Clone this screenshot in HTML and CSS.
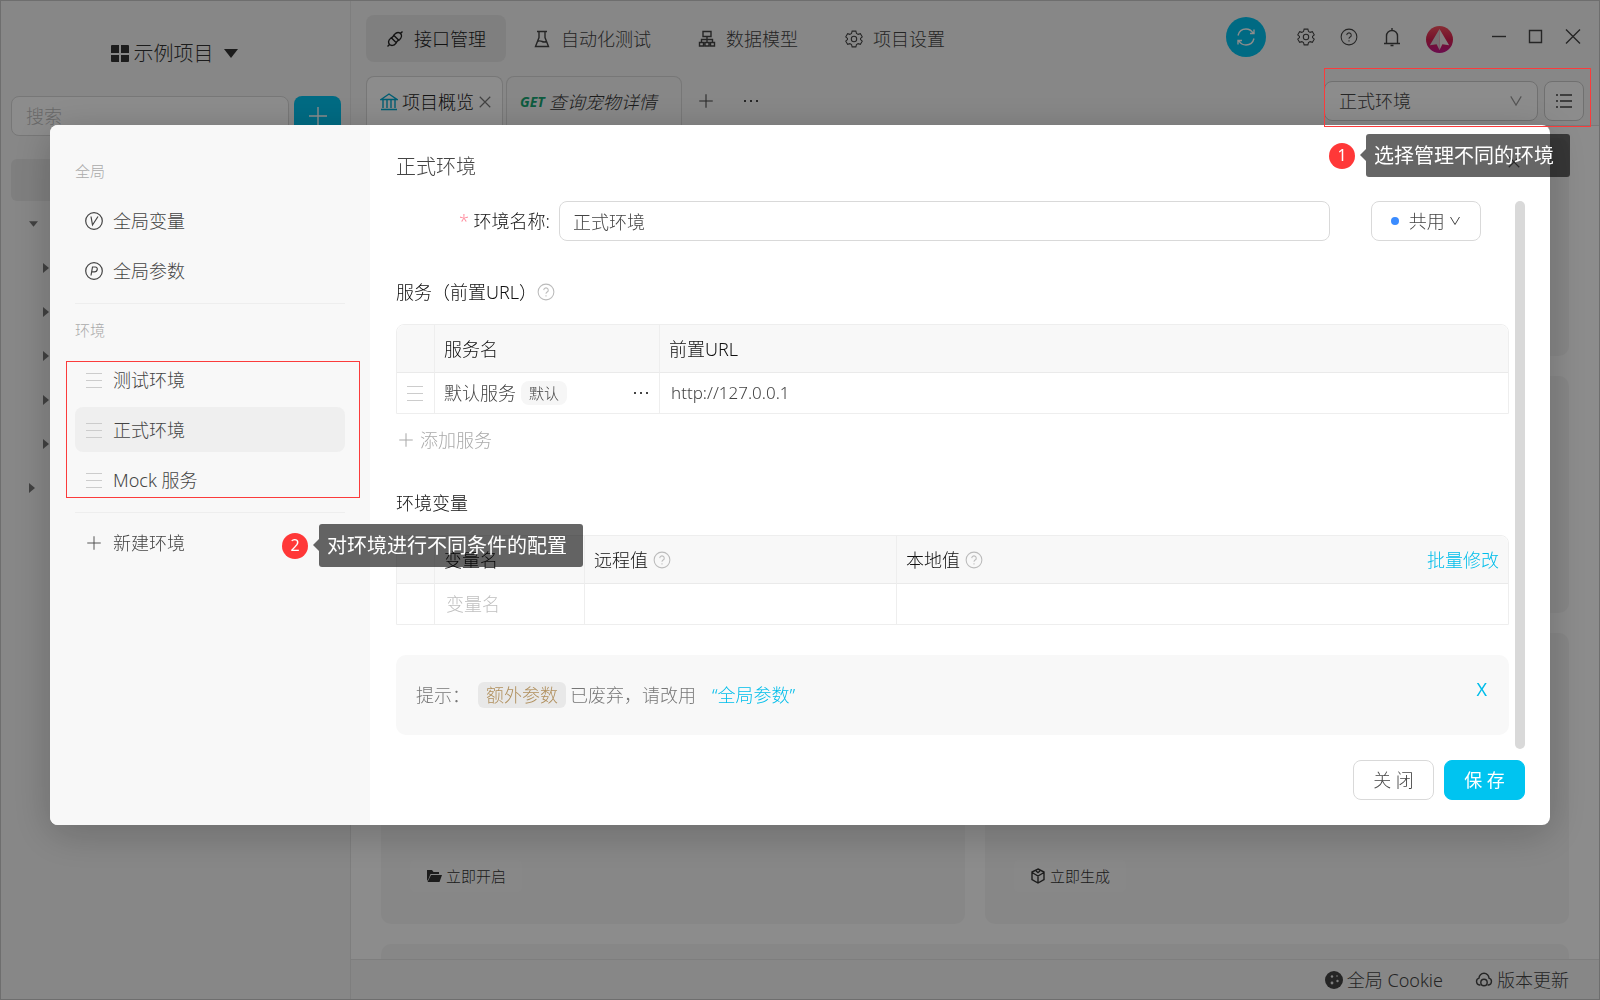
FILE: index.html
```html
<!DOCTYPE html>
<html lang="zh-CN">
<head>
<meta charset="utf-8">
<title>环境管理</title>
<meta name="viewport" content="width=device-width, initial-scale=1">
<link rel="stylesheet" href="styles.css">
</head>
<body>
<svg class="sprite" aria-hidden="true">
  <symbol id="i-gear" viewBox="0 0 24 24"><path d="M9.5 2.5h5l.8 3 2.2 1.300 3-.9 2.500 4.200-2.300 2.200v1.400l2.300 2.200-2.500 4.200-3-.9-2.200 1.300-.8 3h-5l-.8-3-2.200-1.300-3 .9L1 15.900l2.300-2.200v-1.400L1 10.100l2.500-4.200 3 .9 2.200-1.300z" transform="translate(0 -1)"/><circle cx="12" cy="12" r="3.600"/></symbol>
  <symbol id="i-help" viewBox="0 0 24 24"><circle cx="12" cy="12" r="10.500"/><path d="M9 9.500a3 3 0 1 1 4.500 2.600c-1 .6-1.500 1.100-1.500 2.200M12 16.400v1.600"/></symbol>
  <symbol id="i-plus" viewBox="0 0 24 24"><path d="M12 3v18M3 12h18"/></symbol>
  <symbol id="i-close" viewBox="0 0 24 24"><path d="M3 3l18 18M21 3L3 21"/></symbol>
  <symbol id="i-down" viewBox="0 0 24 24"><path d="M3 4l9 15 9-15"/></symbol>
  <symbol id="i-drag" viewBox="0 0 18 18"><path d="M1 2.500h16M1 9.500h16M1 16.500h16"/></symbol>
  <symbol id="i-dots" viewBox="0 0 18 18"><path d="M2 8h2v2H2zM8 8h2v2H8zM14 8h2v2h-2z"/></symbol>
</svg>

<div class="app">
  <aside class="side">
    <button class="project" type="button">
      <svg class="ico fill" viewBox="0 0 18 18"><path d="M1 0h7v8H0V1a1 1 0 0 1 1-1zM10 0h7a1 1 0 0 1 1 1v7h-8zM0 10h8v7H1a1 1 0 0 1-1-1zM10 10h8v6a1 1 0 0 1-1 1h-7z"/></svg>
      <span>示例项目</span>
      <svg class="caret" viewBox="0 0 14 9"><path d="M0 0h14L7 9z"/></svg>
    </button>
    <div class="search">
      <input type="text" placeholder="搜索" aria-label="搜索">
      <button type="button" aria-label="新建"><svg class="ico" viewBox="0 0 18 18"><path d="M9 0v18M0 9h18"/></svg></button>
    </div>
    <div class="root"></div>
    <ul class="tree">
      <li class="l0"><svg viewBox="0 0 10 6" class="tri-d"><path d="M0 0h10L5 6z"/></svg></li>
      <li class="l1"><svg viewBox="0 0 6 10" class="tri-r"><path d="M0 0v10l6-5z"/></svg></li>
      <li class="l1"><svg viewBox="0 0 6 10" class="tri-r"><path d="M0 0v10l6-5z"/></svg></li>
      <li class="l1"><svg viewBox="0 0 6 10" class="tri-r"><path d="M0 0v10l6-5z"/></svg></li>
      <li class="l1"><svg viewBox="0 0 6 10" class="tri-r"><path d="M0 0v10l6-5z"/></svg></li>
      <li class="l1"><svg viewBox="0 0 6 10" class="tri-r"><path d="M0 0v10l6-5z"/></svg></li>
      <li class="l0"><svg viewBox="0 0 6 10" class="tri-r"><path d="M0 0v10l6-5z"/></svg></li>
    </ul>
  </aside>

  <div class="main">
    <header class="top">
      <nav class="nav">
        <a href="#" class="on"><svg class="ico" viewBox="0 0 18 18"><path d="M4 14L1.500 16.500M14 4L16.500 1.500M3.500 14.500c-1.600-2-1-4.500 1-6l.8-.7 5 5-.7.8c-1.600 2-4.200 2.500-6.100.9zM7.700 5.200l.8-.8c1.800-2 4.300-2.400 6-.9 1.600 1.700 1 4.300-.8 6l-.9.8zM5.500 8L7.500 6M10 12.500L12 10.500"/></svg>接口管理</a>
        <a href="#"><svg class="ico" viewBox="0 0 18 18"><path d="M4 1.500h10M6 1.500v6L2.500 16.500h13L12 7.500v-6M4.500 11.500c2-1.300 3.500-.5 4.500 0s2.500 1 4.500 0"/></svg>自动化测试</a>
        <a href="#"><svg class="ico" viewBox="0 0 18 18"><path d="M5 1.500h8v5H5zM9 6.500v3M3.500 12V9.500h11V12M9 9.500V12M1.500 12.500h4v3.500h-4zM7 12.500h4v3.500H7zM12.500 12.500h4v3.500h-4z"/></svg>数据模型</a>
        <a href="#"><svg class="ico"><use href="#i-gear"/></svg>项目设置</a>
      </nav>
      <div class="tools">
        <button class="sync" type="button" aria-label="同步"><svg viewBox="0 0 20 20"><path d="M2 8.500C3 4.500 6 2 10 2c3 0 5.500 1.500 7 4M18 2.500V6.500h-4M18 11.500c-1 4-4 6.500-8 6.500-3 0-5.500-1.500-7-4M2 17.500V13.500h4"/></svg></button>
        <button type="button" aria-label="设置"><svg class="ico"><use href="#i-gear"/></svg></button>
        <button type="button" aria-label="帮助"><svg class="ico"><use href="#i-help"/></svg></button>
        <button type="button" aria-label="通知"><svg class="ico bell" viewBox="0 0 18 20"><path d="M1 16.500h16M3.500 16.500V9a5.500 5.500 0 0 1 11 0v7.500M9 3.500V1M7.500 18.500h3"/></svg></button>
        <button type="button" class="avatar" aria-label="账户"><svg viewBox="0 0 28 28"><defs><linearGradient id="av" x1="0" y1="0" x2="0" y2="1"><stop offset="0" stop-color="#f7525f"/><stop offset=".5" stop-color="#d8204f"/><stop offset="1" stop-color="#c2188f"/></linearGradient></defs><circle cx="14" cy="14" r="14" fill="url(#av)"/><path d="M14 3L4 20l7-1 3 6z" fill="#d9cdd0"/><path d="M14 3l10 17-7-1-3 6z" fill="#f3e9ea"/></svg></button>
        <button type="button" class="win" aria-label="最小化"><svg class="ico" viewBox="0 0 18 18"><path d="M2 8.500h14"/></svg></button>
        <button type="button" class="win" aria-label="最大化"><svg class="ico" viewBox="0 0 18 18"><path d="M2.500 2.500h12v12h-12z"/></svg></button>
        <button type="button" class="win" aria-label="关闭窗口"><svg class="ico" viewBox="0 0 18 18"><path d="M2 1.500l14 14M16 1.500L2 15.500"/></svg></button>
      </div>
    </header>

    <div class="tabs">
      <button type="button" class="tab on"><svg class="ico" viewBox="0 0 18 18"><path d="M1 6.500L9 1l8 5.500zM3 7v8M7 7v8M11 7v8M15 7v8M1 16.500h16"/></svg>项目概览<svg class="x"><use href="#i-close"/></svg></button>
      <button type="button" class="tab api"><b>GET</b><i>查询宠物详情</i></button>
      <button type="button" class="plain" aria-label="新标签"><svg class="ico"><use href="#i-plus"/></svg></button>
      <button type="button" class="plain" aria-label="更多"><svg class="ico fill"><use href="#i-dots"/></svg></button>
      <div class="env">
        <div class="pick">
          <select aria-label="环境"><option>正式环境</option></select>
          <svg class="chev"><use href="#i-down"/></svg>
        </div>
        <button type="button" class="list" aria-label="管理环境"><svg class="ico" viewBox="0 0 18 18"><path d="M5 3h12M5 9h12M5 15h12M1 3h2M1 9h2M1 15h2"/></svg></button>
      </div>
    </div>

    <div class="board">
      <div class="card"></div><div class="card"></div>
      <div class="card"></div><div class="card"></div>
      <div class="card end"><button type="button"><svg class="fill" viewBox="0 0 16 16"><path d="M1 2h5l1.500 2H13v2H4.500L2.500 11 1 13zM5 7h11l-2.500 7H1.500z"/></svg>立即开启</button></div>
      <div class="card end"><button type="button"><svg viewBox="0 0 16 16"><path d="M8 1l6 3v7.500L8 15l-6-3.500V4zM2 4.500L8 8l6-3.500M8 8v7M6 3l2 1.500L10 3M2 9v2.500L4.500 13M14 9v2.500L11.500 13"/></svg>立即生成</button></div>
      <div class="card wide"></div>
    </div>

    <footer class="foot">
      <a href="#"><svg class="ico" viewBox="0 0 18 18"><circle cx="9" cy="9" r="9" fill="currentColor" stroke="none"/><g fill="#e8e8e8" stroke="none"><circle cx="7" cy="5.500" r="1.200"/><circle cx="12.500" cy="10" r="1.200"/><circle cx="7" cy="12" r="1.400"/><circle cx="12" cy="5" r=".8"/></g></svg>全局 Cookie</a>
      <a href="#"><svg class="ico" viewBox="0 0 18 18"><path d="M5.500 14H4.500a3.500 3.500 0 0 1-.5-6.800 5 5 0 0 1 10 0 3.500 3.500 0 0 1-.5 6.800h-1"/><circle cx="9" cy="11.500" r="3.200"/></svg>版本更新</a>
    </footer>
  </div>
</div>

<div class="mask">
  <section class="modal" role="dialog" aria-labelledby="dlg-title">
    <div class="menu">
      <h3>全局</h3>
      <a href="#"><svg class="ico" viewBox="0 0 18 18"><circle cx="9" cy="9" r="8.300"/><path d="M6 4.500L7.500 13 13 4.500"/></svg>全局变量</a>
      <a href="#"><svg class="ico" viewBox="0 0 18 18"><circle cx="9" cy="9" r="8.300"/><path d="M6 13.500L7.500 5h2.700c3.200 0 2.600 4.800-.8 4.800H6.800"/></svg>全局参数</a>
      <hr>
      <h3>环境</h3>
      <a href="#"><svg class="ico drag"><use href="#i-drag"/></svg>测试环境</a>
      <a href="#" class="on"><svg class="ico drag"><use href="#i-drag"/></svg>正式环境</a>
      <a href="#"><svg class="ico drag"><use href="#i-drag"/></svg>Mock 服务</a>
      <hr>
      <a href="#"><svg class="ico"><use href="#i-plus"/></svg>新建环境</a>
    </div>

    <div class="detail">
      <div class="head">
        <h2 id="dlg-title">正式环境</h2>
        <button type="button" class="exit" aria-label="关闭对话框"><svg class="x"><use href="#i-close"/></svg></button>
      </div>
      <div class="scroll">
        <div class="pane">
          <div class="field">
            <label for="env-name"><em>*</em> 环境名称:</label>
            <input id="env-name" type="text" value="正式环境">
            <div class="share">
              <span class="dot"></span>
              <select aria-label="可见范围"><option>共用</option></select>
              <svg class="chev"><use href="#i-down"/></svg>
            </div>
          </div>

          <h4>服务（前置URL）<svg class="ico q"><use href="#i-help"/></svg></h4>
          <table class="grid">
            <thead><tr><th class="c-drag"></th><th class="c-name">服务名</th><th>前置URL</th></tr></thead>
            <tbody><tr>
              <td><svg class="ico drag"><use href="#i-drag"/></svg></td>
              <td><div class="name">默认服务<span class="tag">默认</span><svg class="ico fill more"><use href="#i-dots"/></svg></div></td>
              <td><input class="url" type="text" value="http://127.0.0.1" aria-label="前置URL"></td>
            </tr></tbody>
          </table>
          <button type="button" class="add"><svg class="ico"><use href="#i-plus"/></svg>添加服务</button>

          <h4>环境变量</h4>
          <table class="grid">
            <thead><tr>
              <th class="c-drag"></th>
              <th class="c-var">变量名</th>
              <th class="c-remote"><div class="name">远程值<svg class="ico q"><use href="#i-help"/></svg></div></th>
              <th><div class="name">本地值<svg class="ico q"><use href="#i-help"/></svg><a href="#" class="bulk">批量修改</a></div></th>
            </tr></thead>
            <tbody><tr>
              <td></td>
              <td><input type="text" placeholder="变量名" aria-label="变量名"></td>
              <td></td><td></td>
            </tr></tbody>
          </table>

          <div class="tip">
            <span>提示：</span><code>额外参数</code><span>已废弃，请改用</span><a href="#">“全局参数”</a>
            <button type="button">X</button>
          </div>
        </div>
        <div class="bar"></div>
      </div>
      <div class="actions">
        <button type="button">关 闭</button>
        <button type="button" class="primary">保 存</button>
      </div>
    </div>
  </section>
</div>

<div class="frame frame-env"></div>
<div class="frame frame-list"></div>
<div class="note note-env"><span class="num">1</span><span class="bubble">选择管理不同的环境</span></div>
<div class="note note-list"><span class="num">2</span><span class="bubble">对环境进行不同条件的配置</span></div>
</body>
</html>
```
FILE: styles.css
```css
* { box-sizing: border-box; }

body {
  margin: 0;
  font: 300 18px/24px "Noto Sans", "Noto Sans CJK SC", sans-serif;
  color: #444;
  background: #fff;
  overflow: hidden;
}

button, input, select { font: inherit; color: inherit; }
button { padding: 0; border: 0; background: none; white-space: nowrap; }
a { color: inherit; text-decoration: none; }
h2, h3, h4, ul { margin: 0; padding: 0; font-weight: 300; list-style: none; }
input, select { appearance: none; min-width: 0; border: 0; outline: 0; background: none; padding: 0; }
input::placeholder { color: #bfbfbf; opacity: 1; }

svg { display: block; flex: none; fill: none; stroke: currentColor; stroke-width: 1.4; }
.sprite { position: absolute; width: 0; height: 0; }
.ico { width: 18px; height: 18px; }
.x { width: 14px; height: 14px; }
.chev { width: 14px; height: 14px; }
.fill, .caret, .tri-d, .tri-r { fill: currentColor; stroke: none; }

/* Application window */
.app {
  display: grid;
  grid-template: minmax(0, 1fr) / 350px minmax(0, 1fr);
  height: 100vh;
  border: 1px solid #c8c8c8;
  background: #f6f6f6;
}
.side { border-right: 1px solid #e6e6e6; padding: 0 9px 0 10px; }
.project {
  display: flex;
  align-items: center;
  justify-content: center;
  gap: 5px;
  width: 100%;
  height: 95px;
  padding: 10px 4px 0 0;
  font-size: 20px;
  color: #333;
}
.caret { width: 14px; height: 9px; margin-left: 5px; }
.search { display: flex; gap: 5px; height: 40px; }
.search input {
  flex: 1;
  padding: 0 14px;
  border: 1px solid #d9d9d9;
  border-radius: 8px;
  background: #fff;
}
.search button {
  display: grid;
  place-items: center;
  width: 47px;
  border-radius: 8px;
  background: #00c2ee;
  color: #fff;
}
.root { height: 42px; margin: 23px 0 1px; border-radius: 6px; background: #e8e8e8; }
.tree li { display: flex; align-items: center; height: 44px; color: #777; }
.tree .l0 { padding-left: 18px; }
.tree .l1 { padding-left: 32px; }
.tri-d { width: 9px; height: 6px; }
.tri-r { width: 6px; height: 10px; }

.main { display: grid; grid-template-rows: 75px 50px minmax(0, 1fr) 40px; min-width: 0; }
.top { display: flex; justify-content: space-between; padding: 14px 17px 0 15px; }
.nav { display: flex; gap: 7px; }
.nav a {
  display: flex;
  align-items: center;
  gap: 10px;
  height: 47px;
  padding: 0 20px;
  border-radius: 8px;
}
.nav .on { background: #e8e8e8; color: #222; }
.tools { display: flex; align-items: center; gap: 25px; height: 44px; }
.tools button { display: grid; place-items: center; }
.tools .sync { width: 40px; height: 40px; margin-right: 6px; border-radius: 50%; background: #00c2ee; color: #fff; }
.sync svg { width: 20px; height: 20px; }
.tools .bell { height: 20px; }
.avatar { padding-top: 4px; }
.avatar svg { width: 27px; height: 27px; stroke: none; }
.win { margin-left: 12px; }
.win + .win { margin-left: -6px; }

.tabs { display: flex; gap: 3px; padding-left: 15px; border-bottom: 1px solid #dedede; }
.tab {
  display: flex;
  align-items: center;
  gap: 4px;
  width: 137px;
  padding: 2px 13px 0;
  border: 1px solid #d9d9d9;
  border-bottom: 0;
  border-radius: 8px 8px 0 0;
}
.tab.on { background: #fff; color: #222; }
.tab.on .ico { color: #00a9d0; }
.tab .x { color: #777; stroke-width: 2; }
.tab.api { width: 176px; color: #333; }
.tab b { font: italic 700 14px/24px "Noto Sans", sans-serif; color: #17a673; }
.plain { width: 42px; display: grid; place-items: center; }
.env { display: flex; gap: 6px; margin: 5px 15px 4px auto; }
.pick { display: flex; align-items: center; width: 214px; padding: 0 14px; border: 1px solid #ccc; border-radius: 8px; background: #fff; }
.pick select { flex: 1; }
.pick .chev { color: #999; stroke-width: 2; }
.list { display: grid; place-items: center; width: 40px; border: 1px solid #ccc; border-radius: 8px; background: #fff; }

.board {
  display: grid;
  grid-template: 218px 237px 291px 100px / 1fr 1fr;
  gap: 20px;
  padding: 12px 30px 0;
  background: #fff;
  overflow: hidden;
}
.card { border-radius: 10px; background: #f6f6f6; }
.card.end { display: flex; align-items: flex-end; padding: 32px 29px; }
.card.wide { grid-column: span 2; }
.card button {
  display: flex;
  align-items: center;
  gap: 4px;
  height: 32px;
  padding: 0 16px;
  border-radius: 6px;
  background: #f8f8f8;
  font-size: 15px;
  color: #333;
}
.card svg { width: 16px; height: 16px; }

.foot {
  display: flex;
  align-items: center;
  justify-content: flex-end;
  gap: 32px;
  padding-right: 30px;
  border-top: 1px solid #e6e6e6;
  background: #f6f6f6;
}
.foot a { display: flex; align-items: center; gap: 4px; }

/* Environment dialog */
.mask {
  position: fixed;
  inset: 0;
  display: flex;
  align-items: flex-start;
  padding: 125px 50px 0;
  background: rgba(0, 0, 0, .45);
}
.modal {
  display: grid;
  grid-template-columns: 320px minmax(0, 1fr);
  width: 100%;
  min-height: 700px;
  border-radius: 8px;
  background: #fff;
  box-shadow: 0 8px 40px rgba(0, 0, 0, .22);
}
.menu { padding: 27px 25px; border-radius: 8px 0 0 8px; background: #f8f8f8; }
.menu h3 { height: 46px; font-size: 15px; line-height: 38px; color: #aaa; }
.menu a {
  display: flex;
  align-items: center;
  gap: 10px;
  height: 45px;
  margin-bottom: 5px;
  padding: 0 10px;
  border-radius: 8px;
}
.menu .on { background: #efefef; }
.menu hr { height: 1px; margin: 10px 0 7px; border: 0; background: #eee; }
.menu .ico { stroke-width: 1.2; }
.menu .drag, .drag { color: #ccc; stroke-width: 1; }

.detail { display: flex; flex-direction: column; padding: 26px 25px 25px 26px; }
.head { display: flex; justify-content: space-between; height: 50px; }
.head h2 { font-size: 20px; line-height: 32px; }
.exit { height: 22px; margin-right: 4px; color: #666; }
.exit .x { stroke-width: 2; }
.scroll { display: flex; flex: 1; gap: 6px; }
.pane { flex: 1; min-width: 0; }
.bar { width: 10px; height: 548px; border-radius: 5px; background: #d9d9d9; }

.field { display: flex; align-items: center; height: 40px; }
.field label { width: 163px; padding-right: 9px; text-align: right; color: #111; white-space: nowrap; }
.field em { color: #ff8fa0; font-style: normal; }
.field input { flex: 1; height: 40px; padding: 0 13px; border: 1px solid #d9d9d9; border-radius: 8px; }
.share {
  display: flex;
  align-items: center;
  width: 110px;
  height: 40px;
  margin: 0 28px 0 41px;
  padding: 0 19px;
  border: 1px solid #d9d9d9;
  border-radius: 8px;
}
.share select { width: 41px; }
.share .chev { width: 12px; height: 12px; stroke-width: 2; }
.dot { width: 8px; height: 8px; margin-right: 10px; border-radius: 50%; background: #3b8cff; }

h4 { display: flex; align-items: center; height: 24px; margin: 39px 0 20px; font-size: 18px; color: #111; }
.q { color: #bbb; }
.grid { width: 100%; border-collapse: separate; border-spacing: 0; table-layout: fixed; border: 1px solid #eee; border-radius: 8px 8px 0 0; }
.grid th, .grid td { height: 40px; padding: 0 9px; border-right: 1px solid #eee; text-align: left; font-weight: 300; }
.grid th { height: 48px; border-bottom: 1px solid #eaeaea; background: #f8f8f8; color: #111; }
.grid tr > :last-child { border-right: 0; }
.grid th:first-child { border-radius: 8px 0 0 0; }
.grid th:last-child { border-radius: 0 8px 0 0; }
.grid input { display: block; width: 100%; padding-left: 2px; }
.grid .url { font-size: 17px; }
.c-drag { width: 38px; }
.c-name { width: 225px; }
.c-var { width: 150px; }
.c-remote { width: 312px; }
.name { display: flex; align-items: center; gap: 5px; }
.tag { padding: 0 8px; border-radius: 8px; background: #f6f6f6; font-size: 15px; }
.more { margin-left: auto; }
.bulk { margin-left: auto; color: #00bdea; }
.add { display: flex; align-items: center; gap: 5px; height: 24px; margin: 14px 0 0 1px; color: #aaa; }

.tip {
  display: flex;
  align-items: center;
  height: 80px;
  margin-top: 30px;
  padding: 0 20px;
  border-radius: 10px;
  background: #f8f8f8;
  color: #777;
}
.tip code { margin: 0 4px 0 8px; padding: 1px 8px; border-radius: 6px; background: #e8e8e8; color: #b08f5c; font-family: inherit; }
.tip a { margin-left: 16px; color: #00bdea; }
.tip button { align-self: flex-start; margin: 22px 2px 0 auto; color: #00bdea; font-weight: 400; }

.actions { display: flex; justify-content: flex-end; gap: 10px; }
.actions button { width: 81px; height: 40px; border: 1px solid #d9d9d9; border-radius: 8px; }
.actions .primary { border-color: #00c4f0; background: #00c4f0; color: #fff; font-weight: 400; }

/* Guide marks lying over the page */
.frame { position: absolute; border: 1px solid #fb3b3b; }
.frame-env { top: 68px; right: 9px; width: 267px; height: 59px; }
.frame-list { top: 361px; left: 66px; width: 294px; height: 137px; }
.note { position: absolute; display: flex; align-items: center; gap: 11px; }
.note-env { top: 134px; right: 30px; }
.note-list { top: 524px; left: 282px; }
.num {
  width: 26px;
  height: 26px;
  border-radius: 50%;
  background: #ff3838;
  color: #fff;
  font-size: 16px;
  font-weight: 400;
  line-height: 24px;
  text-align: center;
}
.bubble {
  position: relative;
  padding: 0 16px 0 8px;
  border-radius: 3px;
  background: rgba(0, 0, 0, .6);
  color: #fff;
  font-size: 20px;
  font-weight: 400;
  line-height: 43px;
  white-space: nowrap;
}
.bubble::before {
  content: "";
  position: absolute;
  top: 15px;
  left: -6px;
  border: 6px solid transparent;
  border-left: 0;
  border-right-color: rgba(0, 0, 0, .6);
}
```
